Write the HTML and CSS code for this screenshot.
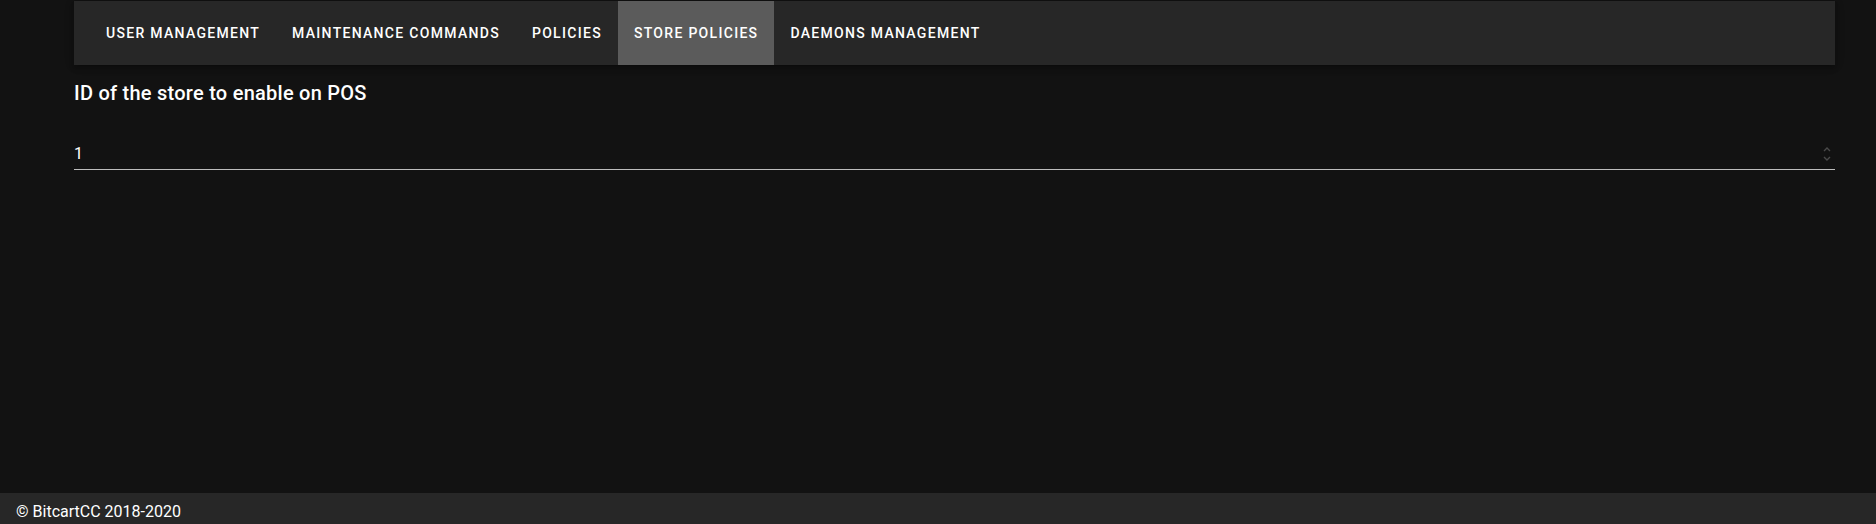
FILE: index.html
```html
<!DOCTYPE html>
<html lang="en">

<head>
    <meta charset="UTF-8">
    <meta name="viewport" content="width=device-width, initial-scale=1.0">
    <title>BitcartCC Admin</title>
    <link rel="stylesheet" href="styles.css">
</head>

<body>
    <div class="app">
        <div class="container">
            <nav class="tabs">
                <div class="tab">User management</div>
                <div class="tab">Maintenance commands</div>
                <div class="tab">Policies</div>
                <div class="tab active">Store policies</div>
                <div class="tab">Daemons management</div>
            </nav>

            <h2 class="title">ID of the store to enable on POS</h2>

            <div class="field">
                <input class="field-input" type="text" value="1">
                <svg class="spin" width="8" height="16" viewBox="0 0 8 16">
                    <path d="M1 5 L4 2 L7 5" />
                    <path d="M1 11 L4 14 L7 11" />
                </svg>
            </div>
        </div>

        <footer class="footer">© BitcartCC 2018-2020</footer>
    </div>
</body>

</html>
```

FILE: styles.css
```css
* {
    margin: 0;
    padding: 0;
    box-sizing: border-box;
}

body {
    background: #121212;
    color: #ffffff;
    font-family: Roboto, "Liberation Sans", sans-serif;
}

.app {
    display: flex;
    flex-direction: column;
    min-height: 100vh;
}

.container {
    flex: 1;
    padding: 1px 41px 0 74px;
}

.tabs {
    display: flex;
    height: 64px;
    padding-left: 16px;
    background: #272727;
    box-shadow: 0 2px 4px -1px rgba(0, 0, 0, .2), 0 4px 5px 0 rgba(0, 0, 0, .14), 0 1px 10px 0 rgba(0, 0, 0, .12);
}

.tab {
    display: flex;
    align-items: center;
    padding: 0 16px;
    font-size: 14px;
    font-weight: 500;
    letter-spacing: 1.3px;
    text-transform: uppercase;
    color: #ffffff;
    cursor: pointer;
}

.tab.active {
    background: #5b5b5b;
}

.title {
    margin-top: 12px;
    font-size: 20px;
    font-weight: 500;
    line-height: 32px;
    letter-spacing: 0.25px;
}

.field {
    display: flex;
    align-items: center;
    margin-top: 27px;
    padding: 8px 4px 5px 0;
    border-bottom: 1px solid #bdbdbd;
}

.field-input {
    flex: 1;
    border: none;
    outline: none;
    background: transparent;
    color: #ffffff;
    font-family: inherit;
    font-size: 16px;
    line-height: 20px;
    height: 20px;
}

.spin {
    fill: none;
    stroke: #4a4a4a;
    stroke-width: 1.4;
}

.footer {
    height: 31px;
    padding: 9px 16px 0;
    background: #272727;
    font-size: 16px;
    line-height: 20px;
}
```
